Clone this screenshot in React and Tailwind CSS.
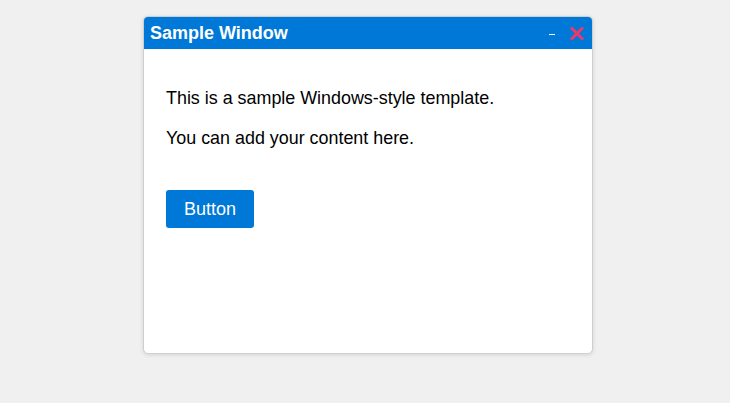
export default function App() {
  return (
    <div className="w-[730px] h-[403px] bg-[#f0f0f0] pt-[16px] pl-[143px]" style={{ fontFamily: '"Liberation Sans", Arial, sans-serif' }}>
      <div className="w-[450px] h-[338px] bg-white border border-[#cfcfcf] rounded-[5px] overflow-hidden shadow-[0_1px_4px_rgba(0,0,0,0.12)] flex flex-col">
        <div className="h-[32px] bg-[#0078d7] flex items-center justify-between pl-[6px] pr-[7px]">
          <span className="text-white font-bold text-[18px] leading-none">Sample Window</span>
          <div className="flex items-center gap-[14px]">
            <span className="block w-[6px] h-[1px] bg-white mt-[2px]"></span>
            <svg width="16" height="15" viewBox="0 0 16 15" className="mt-[1px]">
              <path d="M2 1.5 L14 13.5 M14 1.5 L2 13.5" stroke="#f03868" strokeWidth="3" strokeLinecap="butt" fill="none" />
            </svg>
          </div>
        </div>
        <div className="flex flex-col items-start pl-[22px] pt-[39px]">
          <p className="text-[17.9px] leading-[21px] text-black">This is a sample Windows-style template.</p>
          <p className="text-[17.9px] leading-[21px] text-black mt-[19px]">You can add your content here.</p>
          <button className="mt-[41px] w-[88px] h-[38px] bg-[#0078d7] text-white text-[18px] rounded-[3px] flex items-center justify-center">Button</button>
        </div>
      </div>
    </div>
  );
}
